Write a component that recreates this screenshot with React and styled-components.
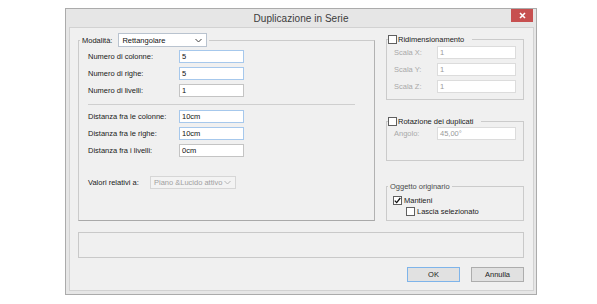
import React from 'react'
import styled, { createGlobalStyle } from 'styled-components'

const GlobalStyle = createGlobalStyle`
  body {
    margin: 0;
    background: #fff;
    font-family: "Liberation Sans", Arial, sans-serif;
    font-size: 7.5px;
    color: #1a1a1a;
  }
  * { box-sizing: border-box; }
`

const Window = styled.div`
  margin: 8px 0 0 65px;
  width: 472px;
  height: 287px;
  border: 1px solid #ababab;
  background: #e6e6e6;
  display: flex;
  flex-direction: column;
`

const TitleBar = styled.div`
  height: 18px;
  display: grid;
  grid-template-columns: 1fr auto 1fr;
  align-items: center;
`

const Title = styled.div`
  grid-column: 2;
  font-size: 10px;
  color: #3c3c3c;
  letter-spacing: 0.05px;
`

const CloseButton = styled.div`
  grid-column: 3;
  justify-self: end;
  align-self: start;
  width: 22px;
  height: 13px;
  margin-right: 3px;
  background: #c75050;
  display: flex;
  align-items: center;
  justify-content: center;
`

const Content = styled.div`
  flex: 1;
  margin: 0 2px 3px 3px;
  border: 1px solid #d2d2d2;
  background: #f0f0f0;
  padding: 5px 9px 0 8px;
  display: flex;
  flex-direction: column;
`

const TopRow = styled.div`
  display: flex;
  gap: 11px;
`

const Group = styled.fieldset`
  margin: 0;
  padding: 0;
  min-width: 0;
  width: ${p => p.$width}px;
  height: ${p => p.$height}px;
  margin-top: ${p => p.$top || 0}px;
  border: 1px solid #cbcbcb;
  border-right-color: ${p => (p.$dark ? '#b2b2b2' : '#cbcbcb')};
  border-bottom-color: ${p => (p.$dark ? '#a9a9a9' : '#cbcbcb')};
`

const Legend = styled.legend`
  margin-left: 1px;
  padding: 0 ${p => p.$padRight ?? 2}px 0 ${p => p.$padLeft ?? 2}px;
  display: flex;
  align-items: center;
  gap: ${p => p.$gap || 0}px;
  line-height: 9px;
  color: ${p => (p.$muted ? '#4a4a4a' : '#1a1a1a')};
`

const LeftBody = styled.div`
  padding: 3px 0 0 9px;
  display: flex;
  flex-direction: column;
`

const Row = styled.div`
  display: flex;
  align-items: center;
  height: 13px;
  margin-top: ${p => p.$top ?? 4}px;
`

const Label = styled.span`
  width: ${p => p.$width}px;
  flex: none;
  white-space: nowrap;
  color: ${p => (p.$disabled ? '#a9a9a9' : '#1a1a1a')};
`

const Input = styled.div`
  width: ${p => p.$width || 65}px;
  height: 13px;
  background: #fff;
  border: 1px solid ${p => (p.$focus ? '#a6c8ec' : p.$disabled ? '#dcdcdc' : '#c4c4c4')};
  padding-left: 2px;
  display: flex;
  align-items: center;
  color: ${p => (p.$disabled ? '#9a9a9a' : '#111')};
`

const Separator = styled.div`
  width: 267px;
  height: 1px;
  background: #cfcfcf;
  margin: 7px 0 5px;
`

const Select = styled.div`
  width: ${p => p.$width}px;
  height: ${p => p.$height || 13}px;
  background: ${p => (p.$disabled ? '#f3f3f3' : '#fff')};
  border: 1px solid ${p => (p.$disabled ? '#d6d6d6' : '#b9c3cf')};
  display: flex;
  align-items: center;
  justify-content: space-between;
  padding: 0 4px 0 3px;
  color: ${p => (p.$disabled ? '#9f9f9f' : '#111')};
`

const Chevron = styled.svg`
  width: 7px;
  height: 5px;
  flex: none;
`

const RightColumn = styled.div`
  width: 138px;
  display: flex;
  flex-direction: column;
`

const RightBody = styled.div`
  padding: ${p => p.$top ?? 2}px 0 0 7px;
  display: flex;
  flex-direction: column;
`

const Box = styled.span`
  width: 9px;
  height: 9px;
  flex: none;
  background: #fff;
  border: 1px solid #5f5f5f;
  display: flex;
  align-items: center;
  justify-content: center;
`

const CheckRow = styled.div`
  display: flex;
  align-items: center;
  gap: 2px;
  height: 9px;
  margin: ${p => p.$top || 0}px 0 0 ${p => p.$indent || 0}px;
`

const MessageBox = styled.div`
  margin-top: 11px;
  height: 26px;
  border: 1px solid #c9c9c9;
  background: #f0f0f0;
`

const ButtonRow = styled.div`
  margin-top: 9px;
  display: flex;
  justify-content: flex-end;
  gap: 11px;
`

const Button = styled.div`
  width: 53px;
  height: 15px;
  display: flex;
  align-items: center;
  justify-content: center;
  background: #e1e1e1;
  border: 1px solid ${p => (p.$primary ? '#7eb4ea' : '#adadad')};
  color: #222;
`

const Check = ({ checked }) => (
  <Box>
    {checked && (
      <svg width="7" height="7" viewBox="0 0 7 7">
        <path d="M0.8 3.6 L2.7 5.6 L6.3 1" fill="none" stroke="#111" strokeWidth="1.3" />
      </svg>
    )}
  </Box>
)

const Arrow = ({ color }) => (
  <Chevron viewBox="0 0 7 5">
    <path d="M0.5 1 L3.5 4 L6.5 1" fill="none" stroke={color} strokeWidth="1" />
  </Chevron>
)

const fieldRows = [
  { label: 'Numero di colonne:', value: '5', focus: true },
  { label: 'Numero di righe:', value: '5', focus: true },
  { label: 'Numero di livelli:', value: '1' },
]

const distRows = [
  { label: 'Distanza fra le colonne:', value: '10cm', focus: true },
  { label: 'Distanza fra le righe:', value: '10cm', focus: true },
  { label: 'Distanza fra i livelli:', value: '0cm' },
]

const App = () => (
  <>
    <GlobalStyle />
    <Window>
      <TitleBar>
        <Title>Duplicazione in Serie</Title>
        <CloseButton>
          <svg width="7" height="7" viewBox="0 0 7 7">
            <path d="M1 1 L6 6 M6 1 L1 6" stroke="#fff" strokeWidth="1.6" />
          </svg>
        </CloseButton>
      </TitleBar>
      <Content>
        <TopRow>
          <Group $width={297} $height={188} $dark>
            <Legend $gap={6}>
              <span>Modalità:</span>
              <Select $width={89} $height={14}>
                <span>Rettangolare</span>
                <Arrow color="#444" />
              </Select>
            </Legend>
            <LeftBody>
              {fieldRows.map((r, i) => (
                <Row key={r.label} $top={i === 0 ? 0 : 4}>
                  <Label $width={91}>{r.label}</Label>
                  <Input $focus={r.focus}>{r.value}</Input>
                </Row>
              ))}
              <Separator />
              {distRows.map((r, i) => (
                <Row key={r.label} $top={i === 0 ? 0 : 4}>
                  <Label $width={91}>{r.label}</Label>
                  <Input $focus={r.focus}>{r.value}</Input>
                </Row>
              ))}
              <Row $top={19}>
                <Label $width={62}>Valori relativi a:</Label>
                <Select $width={86} $disabled>
                  <span>Piano &amp;Lucido attivo</span>
                  <Arrow color="#b5b5b5" />
                </Select>
              </Row>
            </LeftBody>
          </Group>

          <RightColumn>
            <Group $width={138} $height={65} $top={2}>
              <Legend $padLeft={0} $padRight={8} $gap={1}>
                <Check />
                <span>Ridimensionamento</span>
              </Legend>
              <RightBody>
                {['Scala X:', 'Scala Y:', 'Scala Z:'].map((l, i) => (
                  <Row key={l} $top={i === 0 ? 0 : 4}>
                    <Label $width={43} $disabled>{l}</Label>
                    <Input $width={79} $disabled>1</Input>
                  </Row>
                ))}
              </RightBody>
            </Group>

            <Group $width={138} $height={44} $top={17}>
              <Legend $padLeft={0} $padRight={8} $gap={1}>
                <Check />
                <span>Rotazione dei duplicati</span>
              </Legend>
              <RightBody $top={1}>
                <Row $top={0}>
                  <Label $width={43} $disabled>Angolo:</Label>
                  <Input $width={79} $disabled>45,00°</Input>
                </Row>
              </RightBody>
            </Group>

            <Group $width={138} $height={39} $top={21}>
              <Legend $muted>Oggetto originario</Legend>
              <RightBody $top={5}>
                <CheckRow $indent={-1}>
                  <Check checked />
                  <span>Mantieni</span>
                </CheckRow>
                <CheckRow $indent={12} $top={2}>
                  <Check />
                  <span>Lascia selezionato</span>
                </CheckRow>
              </RightBody>
            </Group>
          </RightColumn>
        </TopRow>

        <MessageBox />

        <ButtonRow>
          <Button $primary>OK</Button>
          <Button>Annulla</Button>
        </ButtonRow>
      </Content>
    </Window>
  </>
)

export default App
